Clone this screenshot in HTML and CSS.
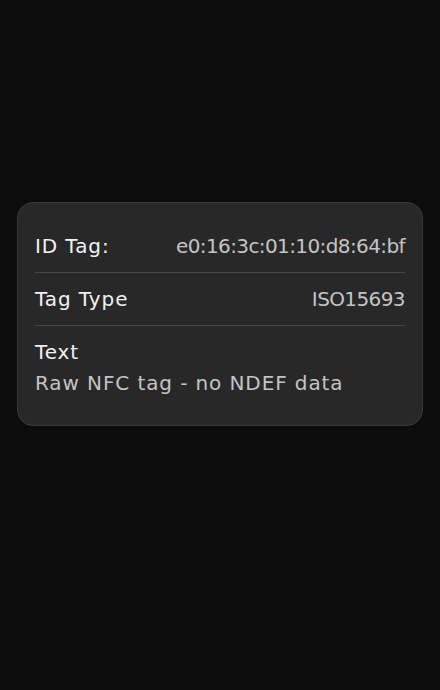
FILE: index.html
```html
<!DOCTYPE html>
<html lang="en">
<head>
  <meta charset="UTF-8" />
  <meta name="viewport" content="width=device-width, initial-scale=1.0"/>
  <title>NFC Tag</title>
  <link rel="stylesheet" href="styles.css">
</head>
<body>

  <div class="card">
    <div class="row">
      <span class="label">ID Tag:</span>
      <span class="value digits">e0:16:3c:01:10:d8:64:bf</span>
    </div>
    <div class="row">
      <span class="label">Tag Type</span>
      <span class="value digits">ISO15693</span>
    </div>
    <div class="row stack">
      <span class="label">Text</span>
      <span class="value">Raw NFC tag - no NDEF data</span>
    </div>
  </div>

</body>
</html>
```

FILE: styles.css
```css
body {
  background-color: #0c0c0c;
  margin: 0;
  font-family: "DejaVu Sans", sans-serif;
  height: 690px;
}
.card {
  margin: 202px 17px 0;
  padding: 17px 17px 16px;
  background-color: #282828;
  border: 1px solid #393939;
  border-radius: 16px;
}
.row {
  display: flex;
  justify-content: space-between;
  padding: 14px 0;
  font-size: 20px;
  line-height: 24px;
  letter-spacing: 0.9px;
  border-bottom: 1px solid #464646;
}
.row.stack {
  flex-direction: column;
  gap: 7px;
  border-bottom: none;
}
.label {
  color: #f2f2f2;
}
.value {
  color: #c4c4c4;
}
.value.digits {
  letter-spacing: -0.6px;
}
```
